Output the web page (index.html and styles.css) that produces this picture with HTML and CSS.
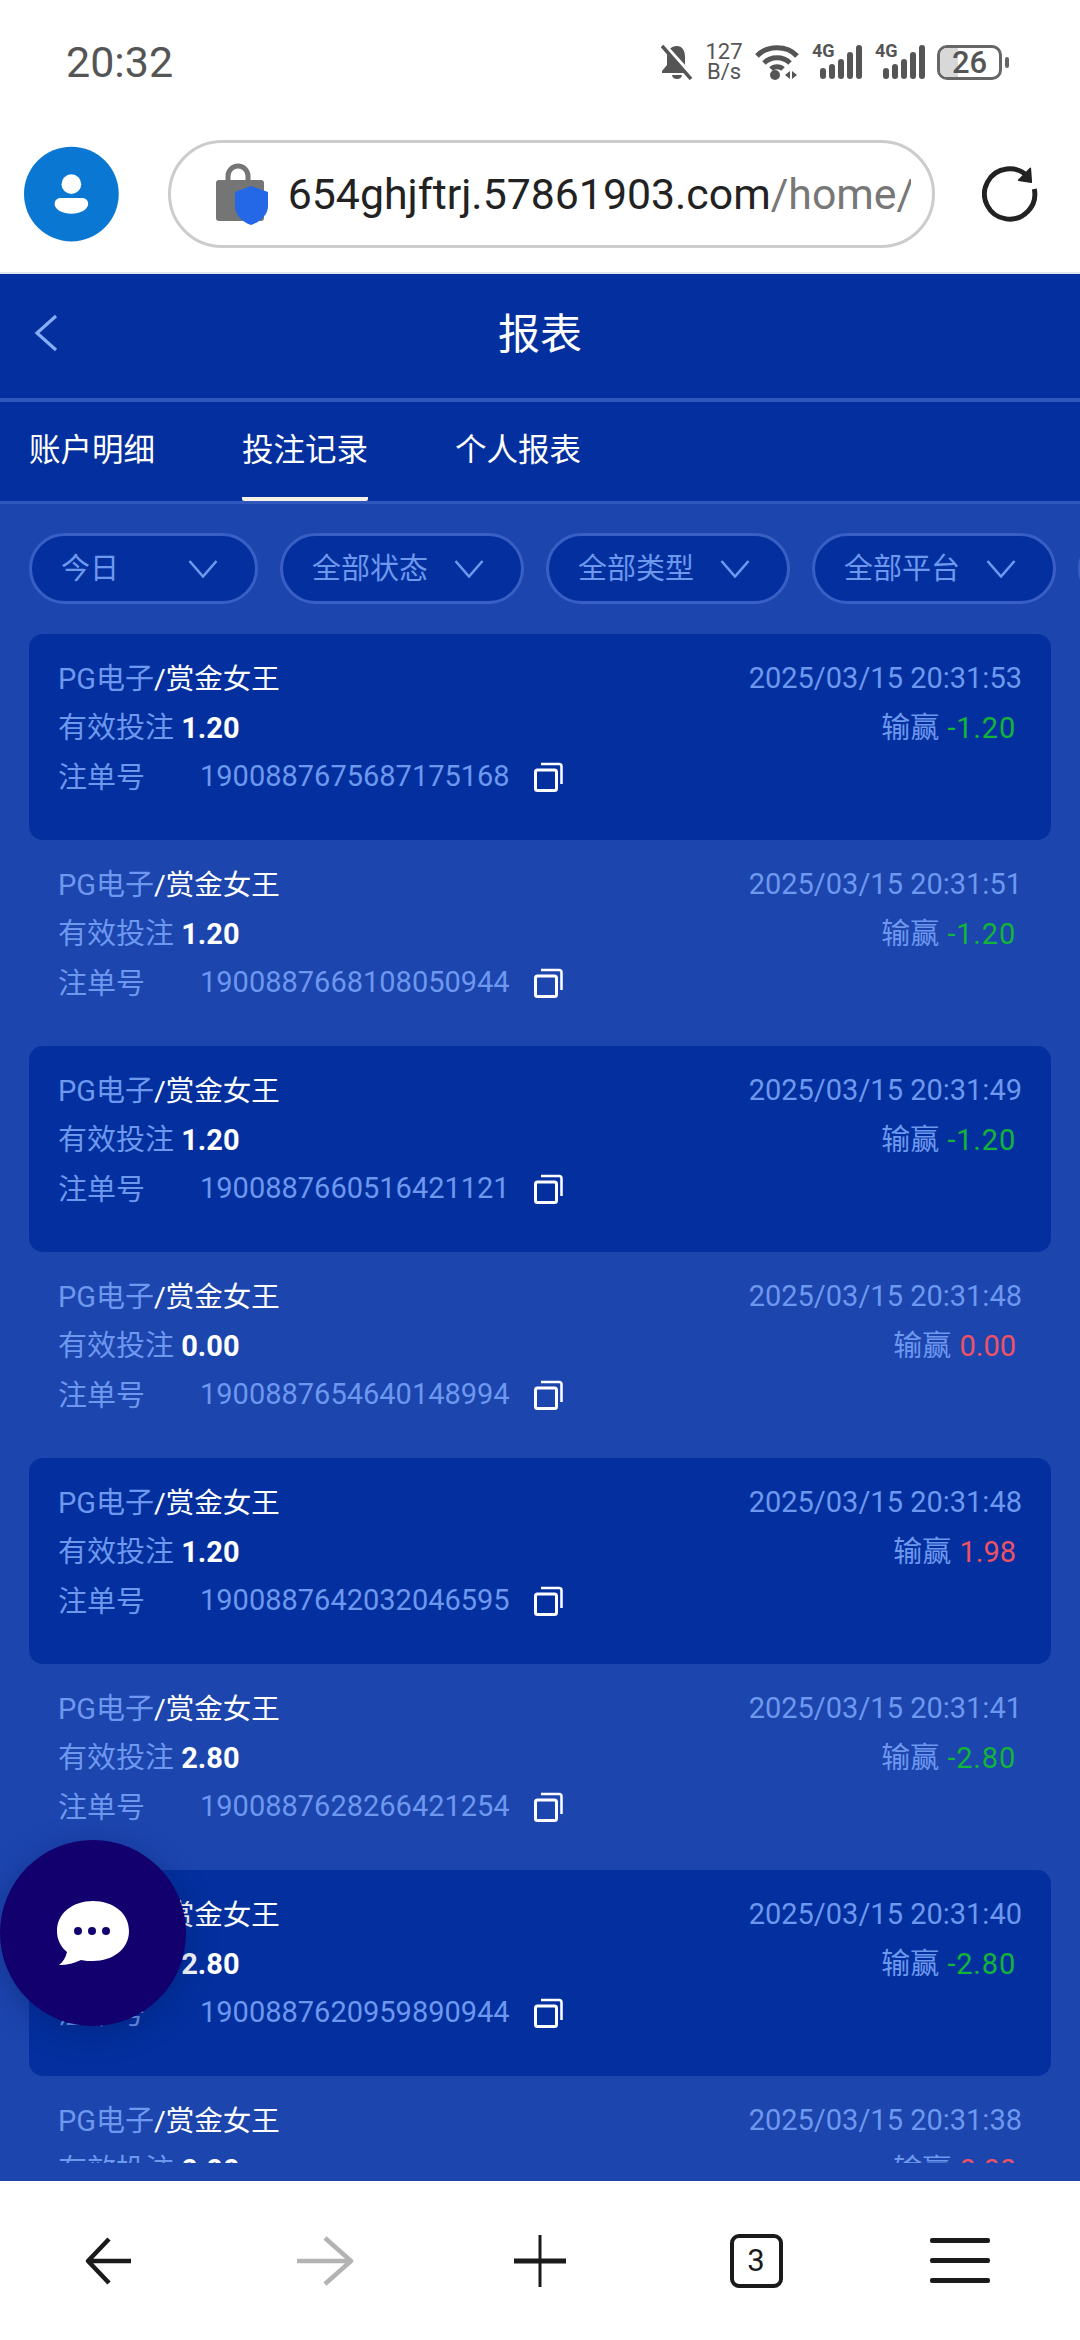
FILE: index.html
```html
<html>
<head>
    <meta charset="utf-8">
    <title>报表</title>
    <link rel="stylesheet" href="styles.css">
</head>

<body>
    <svg class="defs" width="0" height="0">
        <symbol id="copy" viewBox="0 0 29 30">
            <rect x="1.5" y="8" width="21" height="20.5" rx="2" fill="none" stroke="#fff" stroke-width="3"/>
            <path d="M7 2h18a2.5 2.5 0 0 1 2.5 2.5V22" fill="none" stroke="#fff" stroke-width="2.5"/>
        </symbol>
        <symbol id="chev" viewBox="0 0 30 18">
            <path d="M1.5 1 15 16.5 28.5 1" fill="none" stroke="#6d98ee" stroke-width="2.6"/>
        </symbol>
        <symbol id="bars" viewBox="0 0 42 34">
            <rect x="0" y="23" width="6" height="11" rx="3"/>
            <rect x="9" y="19" width="6" height="15" rx="3"/>
            <rect x="18" y="14" width="6" height="20" rx="3"/>
            <rect x="27" y="7" width="6" height="27" rx="3"/>
            <rect x="36" y="0" width="6" height="34" rx="3"/>
        </symbol>
    </svg>

    <div class="page">
        <div class="statusbar">
            <span class="time">20:32</span>
            <div class="status-icons">
                <svg class="ic-bell" width="32" height="36" viewBox="0 0 32 36">
                    <path d="M16 2c-6 0-10 4-10 11v8l-5 6v2h28v-2l-5-6v-8c0-7-3-11-8-11z" fill="#555"/>
                    <path d="M11 31h10c-.5 3-2.500 4-5 4s-4.500-1-5-4z" fill="#555"/>
                    <path d="M3 1l28 31" stroke="#fff" stroke-width="4.500"/>
                    <path d="M1 2l29 33" stroke="#555" stroke-width="3.500"/>
                </svg>
                <div class="speed"><span>127</span><span>B/s</span></div>
                <svg width="44" height="36" viewBox="0 0 44 36">
                    <path d="M2 12C12 1 32 1 42 12M9 19c7-7 19-7 26 0M16 25c3-3 9-3 12 0" fill="none" stroke="#555" stroke-width="5"/>
                    <circle cx="20" cy="31" r="5" fill="#555"/>
                    <path d="M30 31l5-4v8zM37 27l5 4-5 4z" fill="#555"/>
                </svg>
                <div class="signal"><span>4G</span><svg width="42" height="34"><use href="#bars"/></svg></div>
                <div class="signal"><span>4G</span><svg width="42" height="34"><use href="#bars"/></svg></div>
                <div class="battery"><div class="battery-fill"></div><span>26</span></div>
                <div class="battery-nub"></div>
            </div>
        </div>

        <div class="urlbar">
            <svg class="avatar" width="96" height="96" viewBox="0 0 96 96">
                <circle cx="48" cy="48" r="48" fill="#0a78d2"/>
                <circle cx="48" cy="38" r="10" fill="#fff"/>
                <path d="M38 52h20c4 0 7 2 7 6 0 6-8 10-17 10s-17-4-17-10c0-4 3-6 7-6z" fill="#fff"/>
            </svg>
            <div class="address">
                <svg width="54" height="64" viewBox="0 0 54 64">
                    <path d="M13 22v-8a10 10 0 0 1 20 0v8" fill="none" stroke="#757575" stroke-width="5"/>
                    <rect x="1" y="18" width="48" height="41" rx="3" fill="#757575"/>
                    <path d="M36 24l17 6v14c0 9-8 16-17 19-9-3-16-10-16-19V30z" fill="#2468e8"/>
                </svg>
                <div class="url"><span>654ghjftrj.57861903.com</span><span class="url-path">/home/mine/report</span></div>
            </div>
            <svg class="reload" width="58" height="58" viewBox="0 0 58 58">
                <path d="M47 12A25.500 25.500 0 1 0 53 24" fill="none" stroke="#222" stroke-width="5"/>
                <path d="M49 3l1 14-13-2z" fill="#222" stroke="#222" stroke-width="1.500" stroke-linejoin="round"/>
            </svg>
        </div>

        <div class="header">
            <svg class="back" width="26" height="38" viewBox="0 0 26 38">
                <path d="M23 2 4 19l19 17" fill="none" stroke="#86aef6" stroke-width="3.200"/>
            </svg>
            <span class="header-title">报表</span>
        </div>

        <div class="tabs">
            <div class="tab">账户明细</div>
            <div class="tab active">投注记录</div>
            <div class="tab">个人报表</div>
        </div>

        <div class="content">
            <div class="filters">
                <div class="pill pill-short"><span>今日</span><svg width="30" height="18"><use href="#chev"/></svg></div>
                <div class="pill"><span>全部状态</span><svg width="30" height="18"><use href="#chev"/></svg></div>
                <div class="pill"><span>全部类型</span><svg width="30" height="18"><use href="#chev"/></svg></div>
                <div class="pill"><span>全部平台</span><svg width="30" height="18"><use href="#chev"/></svg></div>
                <div class="pill"><span>全部</span><svg width="30" height="18"><use href="#chev"/></svg></div>
            </div>

            <div class="list">
                <div class="record dark">
                    <div class="row"><span>PG电子<b>/赏金女王</b></span><span class="date">2025/03/15 20:31:53</span></div>
                    <div class="row"><span>有效投注 <b class="amount">1.20</b></span><span class="win">输赢 <em class="lose">-1.20</em></span></div>
                    <div class="row-no"><span class="no-label">注单号</span><span class="no">1900887675687175168</span><svg class="copy" width="29" height="30"><use href="#copy"/></svg></div>
                </div>
                <div class="record">
                    <div class="row"><span>PG电子<b>/赏金女王</b></span><span class="date">2025/03/15 20:31:51</span></div>
                    <div class="row"><span>有效投注 <b class="amount">1.20</b></span><span class="win">输赢 <em class="lose">-1.20</em></span></div>
                    <div class="row-no"><span class="no-label">注单号</span><span class="no">1900887668108050944</span><svg class="copy" width="29" height="30"><use href="#copy"/></svg></div>
                </div>
                <div class="record dark">
                    <div class="row"><span>PG电子<b>/赏金女王</b></span><span class="date">2025/03/15 20:31:49</span></div>
                    <div class="row"><span>有效投注 <b class="amount">1.20</b></span><span class="win">输赢 <em class="lose">-1.20</em></span></div>
                    <div class="row-no"><span class="no-label">注单号</span><span class="no">1900887660516421121</span><svg class="copy" width="29" height="30"><use href="#copy"/></svg></div>
                </div>
                <div class="record">
                    <div class="row"><span>PG电子<b>/赏金女王</b></span><span class="date">2025/03/15 20:31:48</span></div>
                    <div class="row"><span>有效投注 <b class="amount">0.00</b></span><span class="win">输赢 <em class="gain">0.00</em></span></div>
                    <div class="row-no"><span class="no-label">注单号</span><span class="no">1900887654640148994</span><svg class="copy" width="29" height="30"><use href="#copy"/></svg></div>
                </div>
                <div class="record dark">
                    <div class="row"><span>PG电子<b>/赏金女王</b></span><span class="date">2025/03/15 20:31:48</span></div>
                    <div class="row"><span>有效投注 <b class="amount">1.20</b></span><span class="win">输赢 <em class="gain">1.98</em></span></div>
                    <div class="row-no"><span class="no-label">注单号</span><span class="no">1900887642032046595</span><svg class="copy" width="29" height="30"><use href="#copy"/></svg></div>
                </div>
                <div class="record">
                    <div class="row"><span>PG电子<b>/赏金女王</b></span><span class="date">2025/03/15 20:31:41</span></div>
                    <div class="row"><span>有效投注 <b class="amount">2.80</b></span><span class="win">输赢 <em class="lose">-2.80</em></span></div>
                    <div class="row-no"><span class="no-label">注单号</span><span class="no">1900887628266421254</span><svg class="copy" width="29" height="30"><use href="#copy"/></svg></div>
                </div>
                <div class="record dark">
                    <div class="row"><span>PG电子<b>/赏金女王</b></span><span class="date">2025/03/15 20:31:40</span></div>
                    <div class="row"><span>有效投注 <b class="amount">2.80</b></span><span class="win">输赢 <em class="lose">-2.80</em></span></div>
                    <div class="row-no"><span class="no-label">注单号</span><span class="no">1900887620959890944</span><svg class="copy" width="29" height="30"><use href="#copy"/></svg></div>
                </div>
                <div class="record">
                    <div class="row"><span>PG电子<b>/赏金女王</b></span><span class="date">2025/03/15 20:31:38</span></div>
                    <div class="row"><span>有效投注 <b class="amount">0.00</b></span><span class="win">输赢 <em class="gain">0.00</em></span></div>
                </div>
            </div>

            <div class="chat">
                <svg width="74" height="66" viewBox="0 0 74 66">
                    <path d="M37 1C17 1 1 13 1 31c0 9 4 16 10 21-1 5-4 10-8 13 8 0 16-2 22-5 4 1 8 1 12 1 20 0 36-12 36-30S57 1 37 1z" fill="#fff"/>
                    <circle cx="22" cy="31" r="4" fill="#12006e"/>
                    <circle cx="36" cy="31" r="4" fill="#12006e"/>
                    <circle cx="50" cy="31" r="4" fill="#12006e"/>
                </svg>
            </div>
        </div>

        <div class="bottombar">
            <div class="slot">
                <svg width="60" height="60" viewBox="0 0 60 60">
                    <path d="M53 30H10M31 8 10 30l21 22" fill="none" stroke="#1a1a1a" stroke-width="4.500" stroke-linejoin="round"/>
                </svg>
            </div>
            <div class="slot">
                <svg width="60" height="60" viewBox="0 0 60 60">
                    <path d="M3 30h54M31 7l26 23-26 23" fill="none" stroke="#b3b3b3" stroke-width="4.500" stroke-linejoin="round"/>
                </svg>
            </div>
            <div class="slot">
                <svg width="60" height="60" viewBox="0 0 60 60">
                    <path d="M4 30h52" stroke="#1a1a1a" stroke-width="5"/>
                    <path d="M30 4v52" stroke="#1a1a1a" stroke-width="3"/>
                </svg>
            </div>
            <div class="slot"><div class="tabcount">3</div></div>
            <div class="slot"><div class="menu"><i></i><i></i><i></i></div></div>
        </div>
    </div>
</body>
</html>
```

FILE: styles.css
```css
* {
    box-sizing: border-box;
}

body {
    margin: 0;
    width: 1080px;
    height: 2340px;
    overflow: hidden;
    background: #fff;
    font-family: Roboto, "Noto Sans CJK SC", sans-serif;
}

.defs {
    position: absolute;
}

.page {
    display: flex;
    flex-direction: column;
    height: 2340px;
}

/* status bar */
.statusbar {
    height: 130px;
    display: flex;
    align-items: center;
    justify-content: space-between;
    padding: 0 71px 6px 66px;
    color: #555;
}

.time {
    font-size: 43px;
}

.status-icons {
    display: flex;
    align-items: center;
    gap: 13px;
    fill: #555;
}

.speed {
    display: flex;
    flex-direction: column;
    align-items: center;
    font-size: 22px;
    line-height: 20px;
    width: 36px;
}

.signal {
    display: flex;
    width: 50px;
    height: 36px;
    position: relative;
}

.signal span {
    position: absolute;
    left: 0;
    top: -3px;
    font-size: 18px;
    font-weight: 700;
    line-height: 20px;
}

.signal svg {
    position: absolute;
    left: 8px;
    top: 1px;
}

.battery {
    position: relative;
    width: 65px;
    height: 35px;
    margin-left: -1px;
    border: 3px solid #666;
    border-radius: 10px;
    overflow: hidden;
    display: flex;
    align-items: center;
    justify-content: center;
    font-size: 31px;
    font-weight: 500;
}

.battery-fill {
    position: absolute;
    left: 0;
    top: 0;
    bottom: 0;
    width: 18px;
    background: #d8d8d8;
}

.battery span {
    position: relative;
}

.battery-nub {
    width: 4px;
    height: 11px;
    margin-left: -10px;
    background: #666;
    border-radius: 2px;
}

/* address bar */
.urlbar {
    height: 144px;
    display: flex;
    align-items: center;
    padding: 0 41px 14px 24px;
    border-bottom: 2px solid #e2e6ef;
}

.address {
    width: 767px;
    height: 108px;
    margin-left: 49px;
    padding: 0 21px 0 44px;
    display: flex;
    align-items: center;
    gap: 19px;
    border: 3px solid #ccc;
    border-radius: 54px;
}

.address svg {
    flex: none;
}

.url {
    flex: 1;
    overflow: hidden;
    white-space: nowrap;
    font-size: 42.800px;
    color: #222;
}

.url-path {
    color: #777;
}

.reload {
    margin-left: 47px;
}

/* page header */
.header {
    height: 124px;
    flex: none;
    display: flex;
    align-items: center;
    justify-content: center;
    padding-bottom: 12px;
    position: relative;
    background: #03309e;
}

.back {
    position: absolute;
    left: 33px;
    top: 40px;
}

.header-title {
    font-size: 42px;
    color: #fff;
}

.tabs {
    height: 106px;
    flex: none;
    display: flex;
    gap: 87px;
    padding: 0 29px;
    background: #03309e;
    border-top: 4px solid #3058bc;
    border-bottom: 3px solid #3058bc;
}

.tab {
    height: 99px;
    padding-bottom: 9px;
    display: flex;
    align-items: center;
    font-size: 31.500px;
    color: #fff;
}

.tab.active {
    border-bottom: 4px solid #f4f0e6;
    border-radius: 0 0 2px 2px;
    padding-bottom: 5px;
}

/* filters and list */
.content {
    flex: 1;
    position: relative;
    background: #1c45ae;
    overflow: hidden;
    padding-bottom: 18px;
    display: flex;
    flex-direction: column;
}

.filters {
    display: flex;
    gap: 22px;
    padding: 29px 0 0 29px;
    flex: none;
}

.pill {
    flex: none;
    width: 244px;
    height: 71px;
    padding: 0 37px 0 29px;
    display: flex;
    align-items: center;
    justify-content: space-between;
    background: #03309e;
    border: 3px solid #3a5fc4;
    border-radius: 36px;
    font-size: 29px;
    color: #6d98ee;
}

.pill span {
    margin-bottom: 5px;
}

.pill-short {
    width: 229px;
}

.list {
    flex: 1;
    overflow: hidden;
    margin-top: 30px;
    padding: 0 29px;
}

.record {
    height: 206px;
    padding: 18px 29px 0;
    font-size: 29px;
    color: #6d98ee;
}

.record.dark {
    background: #03309e;
    border-radius: 14px;
}

.row {
    height: 50px;
    display: flex;
    align-items: center;
    justify-content: space-between;
}

.row:first-child {
    height: 48px;
}

.row b {
    font-weight: 400;
    font-size: 28.500px;
    color: #fff;
}

.row b.amount {
    font-weight: 700;
    font-size: 29px;
}

.date {
    padding-top: 3px;
}

.win {
    margin-right: 6px;
}

.win em {
    font-style: normal;
    margin-left: 1px;
}

.lose {
    color: #12b43a;
    letter-spacing: .8px;
}

.gain {
    color: #ee5266;
}

.row-no {
    height: 50px;
    display: flex;
    align-items: center;
}

.no-label {
    width: 142px;
}

.no {
    padding-top: 2px;
}

.copy {
    margin: 3px 0 0 24px;
}

.chat {
    position: absolute;
    left: 0;
    top: 1336px;
    width: 186px;
    height: 186px;
    display: flex;
    align-items: center;
    justify-content: center;
    background: #12006e;
    border-radius: 50%;
    box-shadow: 0 6px 30px rgba(3, 20, 90, .35);
}

/* browser toolbar */
.bottombar {
    height: 159px;
    flex: none;
    display: flex;
    background: #fff;
}

.slot {
    flex: 1;
    display: flex;
    align-items: center;
    justify-content: center;
}

.tabcount {
    width: 53px;
    height: 54px;
    display: flex;
    align-items: center;
    justify-content: center;
    border: 4px solid #1a1a1a;
    border-radius: 9px;
    font-size: 31px;
    color: #1a1a1a;
}

.menu {
    width: 60px;
    margin-right: 24px;
    display: flex;
    flex-direction: column;
    gap: 15px;
}

.menu i {
    display: block;
    height: 5px;
    background: #1a1a1a;
    border-radius: 2px;
}
```
